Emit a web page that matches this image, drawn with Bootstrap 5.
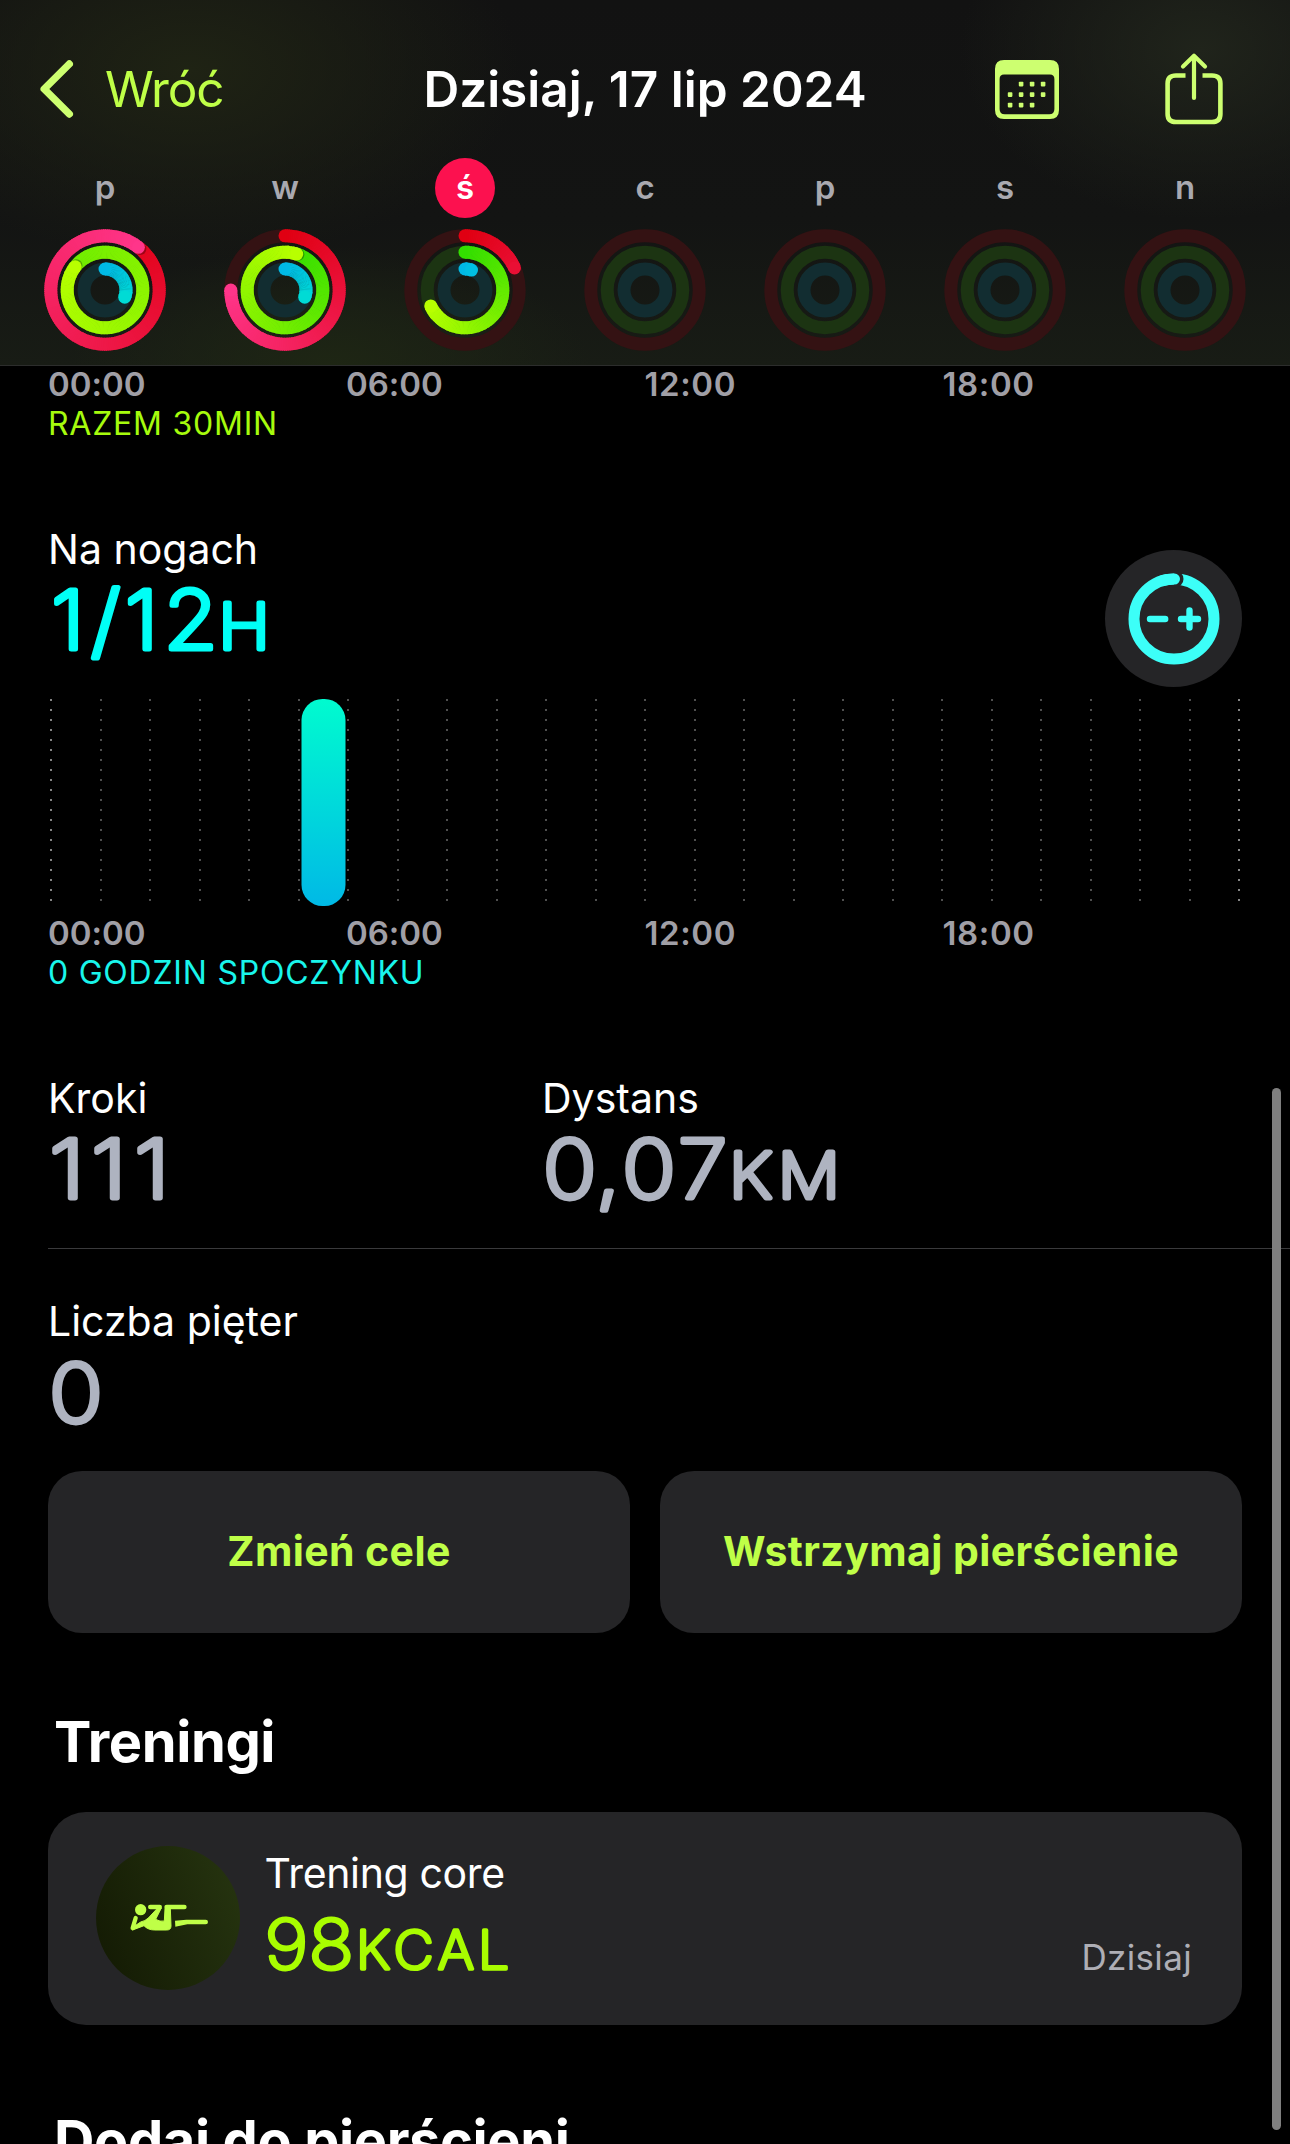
<!DOCTYPE html>
<html lang="pl" data-bs-theme="dark">
<head>
<meta charset="utf-8">
<meta name="viewport" content="width=device-width, initial-scale=1">
<title>Aktywność – Dzisiaj, 17 lip 2024</title>
<link rel="stylesheet" href="https://cdn.jsdelivr.net/npm/bootstrap@5.3.0/dist/css/bootstrap.min.css">
<style>
  body { font-family: Inter, "Liberation Sans", sans-serif; background: #000; color: #fff; height: 2144px; overflow: hidden; }
  svg { display: block; flex: none; overflow: visible; }
  .top-bar {
    height: 366px; padding-top: 59px; border-bottom: 1px solid #2c2d2c;
    background:
      radial-gradient(ellipse 330px 190px at 190px 70px, #1f2314 0%, #1b1f1400 100%),
      radial-gradient(ellipse 240px 170px at 1200px 50px, #20241b 0%, #1c1f1800 100%),
      radial-gradient(ellipse 260px 120px at 330px 366px, #1e2614 0%, #1c241400 100%),
      linear-gradient(#121212 0, #131413 60%, #181c15 100%);
  }
  .title-grid { display: grid; grid-template: 60px / 1fr auto 1fr; line-height: 60px; font-size: 49.5px; }
  .back { padding-left: 40px; gap: 32px; color: #bfff47; letter-spacing: -1.1px; }
  .tools { padding-right: 67px; gap: 106px; }
  .days { padding: 39px 15px 0; }
  .day-name { width: 60px; height: 60px; line-height: 58px; font-size: 33px; font-weight: 600; color: #a9a9b0; margin-bottom: 11px; }
  .day-name.today { background: #fc114f; color: #fff; }
  .body-pad { padding-left: 48px; }
  .hours { height: 36px; line-height: 36px; font-size: 33px; font-weight: 600; color: #a09fa6; }
  .hours span { width: 298px; letter-spacing: -.05px; }
  .hours span:nth-child(n+3) { letter-spacing: .6px; padding-left: .5px; }
  .total { margin-top: 3px; margin-bottom: -1px; line-height: 38px; font-size: 32px; letter-spacing: .77px; }
  .metric { line-height: 50px; font-size: 41px; }
  .gap-lg { margin-top: 82px; }
  .figure-text { font-weight: 200; stroke-linejoin: round; stroke-linecap: round; }
  .adjust { width: 137px; height: 137px; margin: 26px 48px 0 0; background: #252527; }
  .c-lime { color: #a6fb0d; }
  .c-aqua { color: #19f5eb; }
  .rule { height: 1px; background: #3a3a3c; margin: 15px 0 47px; }
  .actions { margin: 15px 48px 0 0; gap: 30px; }
  .action { height: 162px; border-radius: 34px; background: #252527; color: #bfff47; font-size: 41px; font-weight: 700; letter-spacing: .4px; border: 0; }
  .section-title { line-height: 70px; font-size: 56px; font-weight: 700; letter-spacing: -.42px; margin: 74px 0 0 6px; }
  .workout { margin: 35px 48px 0 0; height: 213px; border-radius: 38px; background: #252527; padding: 34px 50px 0 48px; }
  .workout .metric { margin: 2px 0 0 -1.5px; letter-spacing: -.36px; }
  .when { margin-bottom: 48px; line-height: 40px; font-size: 35px; letter-spacing: .35px; color: #aeaeb5; }
  .scroll-thumb { top: 1088px; left: 1272px; width: 9px; height: 1042px; background: #7f7f7f; }
</style>
<script src="https://cdn.jsdelivr.net/npm/bootstrap@5.3.0/dist/js/bootstrap.bundle.min.js"></script>
</head>
<body class="position-relative">

<header class="top-bar">
  <div class="title-grid align-items-center">
    <a class="back d-flex align-items-center text-decoration-none" href="#">
      <svg width="33" height="58" viewBox="0 0 33 58"><path d="M29.3 4 4.2 29 29.3 54" fill="none" stroke="#cdff70" stroke-width="7.4" stroke-linecap="round" stroke-linejoin="round"/></svg>
      <span>Wróć</span>
    </a>
    <div class="fw-semibold">Dzisiaj, 17 lip 2024</div>
    <div class="tools d-flex justify-content-end align-items-center">
      <svg width="64" height="59" viewBox="0 0 64 59" fill="#cdff70">
        <path fill-rule="evenodd" d="M9 0H55Q64 0 64 9V50Q64 59 55 59H9Q0 59 0 50V9Q0 0 9 0ZM9 14.500Q4.600 14.500 4.600 19V49Q4.600 54.300 9.800 54.300H54.200Q59.400 54.300 59.400 49V19Q59.400 14.500 55 14.500Z"/>
        <g id="cal-dots"></g>
      </svg>
      <svg width="58" height="72" viewBox="0 0 58 72" fill="none" stroke="#cdff70" stroke-width="4.600" stroke-linecap="round" stroke-linejoin="round">
        <path d="M20.500 22.500H11Q2.600 22.500 2.600 30.500V61Q2.600 69 11 69H47Q55.400 69 55.400 61V30.500Q55.400 22.500 47 22.500H37.500" stroke-linecap="butt"/>
        <path d="M29 45V3.500M18 13.500 29 2.800 40 13.500" stroke-width="4.200"/>
      </svg>
    </div>
  </div>
  <div class="days d-flex" id="days"></div>
</header>

<main class="body-pad">
  <div class="hours d-flex"><span>00:00</span><span>06:00</span><span>12:00</span><span>18:00</span></div>
  <div class="total c-lime">RAZEM 30MIN</div>

  <section class="gap-lg">
    <div class="d-flex justify-content-between">
      <div>
        <div class="metric">Na nogach</div>
        <svg width="400" height="110" class="figure-text" fill="#00fff6" stroke="#00fff6" stroke-width="5">
          <text y="75" font-size="81" x="2.9 39.8 71.4 107.1" transform="scale(1.08 1)">1/12</text>
          <text y="75" font-size="62.600" x="153.600" transform="scale(1.11 1)">H</text>
        </svg>
      </div>
      <div class="adjust rounded-circle d-flex align-items-center justify-content-center">
        <svg width="92" height="92" viewBox="-46 -46 92 92" fill="none" stroke="#3cfff8" stroke-linecap="round">
          <circle r="40" stroke-width="11"/>
          <path d="M0-40H1" stroke="#252527" stroke-width="17"/>
          <path d="M-12-38.160A40 40 0 0 1 0-40" stroke-width="11" stroke-linecap="butt"/>
          <path d="M-6-39.550A40 40 0 0 1 .5-40" stroke-width="11"/>
          <path d="M-24 0H-8.800M7 0H24M15.500-8.500V8.500" stroke-width="6.400"/>
        </svg>
      </div>
    </div>
    <svg width="1242" height="208" style="margin-top:12px">
      <defs><linearGradient id="stand" x1="0" y1="0" x2="0" y2="1"><stop stop-color="#00fbcf"/><stop offset="1" stop-color="#00b9e6"/></linearGradient></defs>
      <g id="grid"></g>
      <rect x="253.500" y="0" width="44" height="207" rx="21" fill="url(#stand)"/>
    </svg>
    <div class="hours d-flex mt-2"><span>00:00</span><span>06:00</span><span>12:00</span><span>18:00</span></div>
    <div class="total c-aqua">0 GODZIN SPOCZYNKU</div>
  </section>

  <section class="gap-lg">
    <div class="d-flex">
      <div style="width:494px">
        <div class="metric">Kroki</div>
        <svg width="300" height="110" class="figure-text" fill="#aeb3c0" stroke="#aeb3c0" stroke-width="5"><text y="75.200" font-size="81" x="1 37.6 75" transform="scale(1.15 1)">111</text></svg>
      </div>
      <div>
        <div class="metric">Dystans</div>
        <svg width="400" height="110" class="figure-text" fill="#aeb3c0" stroke="#aeb3c0" stroke-width="5">
          <text y="75.200" font-size="81" x=".8 48.9 72.8 123.7" transform="scale(1.1 1)">0,07</text>
          <text y="75.200" font-size="62.600" x="170.2 214.6" transform="scale(1.1 1)">KM</text>
        </svg>
      </div>
    </div>
    <div class="rule"></div>
    <div class="metric">Liczba pięter</div>
    <svg width="300" height="110" class="figure-text" fill="#aeb3c0" stroke="#aeb3c0" stroke-width="5"><text y="75.500" font-size="81" x="1" transform="scale(1.1 1)">0</text></svg>
  </section>

  <div class="actions d-flex">
    <button class="action flex-fill w-50">Zmień cele</button>
    <button class="action flex-fill w-50">Wstrzymaj pierścienie</button>
  </div>

  <h2 class="section-title">Treningi</h2>
  <div class="workout d-flex">
    <svg width="144" height="144" viewBox="48 48 432 432">
      <defs><linearGradient id="disc" x1="0" y1=".7" x2="1" y2=".3"><stop stop-color="#141b04"/><stop offset="1" stop-color="#25330f"/></linearGradient></defs>
      <circle cx="264" cy="264" r="216" fill="url(#disc)"/>
      <g fill="#bfff47" stroke="#bfff47" stroke-linecap="round" stroke-linejoin="round">
        <circle cx="182" cy="239" r="17" stroke="none"/>
        <path d="M167 264 158 294" fill="none" stroke-width="13"/>
        <path d="M211 231H239M260 231H313" fill="none" stroke-width="14"/>
        <path d="M158 300 192 287Q204 300 224 300H260Q273 300 273 288L271 236 262 228Q255 230 255 236L253 273Q240 276 227 268L244 234 233 234 205 264Q196 273 182 276L158 292Z" stroke-width="3"/>
        <path d="M285 272 319 269H377A7 7 0 0 1 377 283H322L286 290Z" stroke="none"/>
      </g>
    </svg>
    <div style="margin-left:26px">
      <div class="metric">Trening core</div>
      <svg width="400" height="85" class="figure-text" fill="#a9fd00" stroke="#a9fd00" stroke-width="3.200">
        <text y="70.700" font-size="68.500" x="-1.4 38.6" transform="scale(1.1 1)">98</text>
        <text y="70.700" font-size="52.700" x="85.7 121.4 163.7 201.8" transform="scale(1.05 1)" stroke-width="3.600">KCAL</text>
      </svg>
    </div>
    <div class="when ms-auto align-self-end">Dzisiaj</div>
  </div>

  <h2 class="section-title text-nowrap" style="margin-top:81px">Dodaj do pierścieni</h2>
</main>

<div class="scroll-thumb position-absolute rounded-pill"></div>

<script>
  // Concentric rings: radii, track colours, stroke width, and start/end colours.
  const RADII = [54.2, 37.8, 21], TRACK = ['#341213', '#1c3412', '#122d31'], W = 13;
  const START = [[224, 0, 18], [51, 222, 0], [0, 185, 230]], END = [[255, 53, 138], [184, 255, 0], [0, 225, 210]];
  // Weekday letter and sweep in degrees of each ring; above 360 the ring overlaps itself.
  const week = [
    ['p', [398, 668, 110]], ['w', [270, 378, 110]], ['ś', [66, 245, 18]],
    ['c', null], ['p', null], ['s', null], ['n', null]
  ];
  const pt = (r, d) => { const a = d * Math.PI / 180; return [(r * Math.sin(a)).toFixed(2), (-r * Math.cos(a)).toFixed(2)]; };
  const mix = (a, b, t) => 'rgb(' + a.map((v, i) => Math.round(v + (b[i] - v) * t)).join() + ')';
  function arc(i, sweep) {
    const r = RADII[i], full = Math.max(sweep, i === 1 ? 200 : i ? 130 : 230);
    const col = d => mix(START[i], END[i], Math.max(0, d) / full);
    const cap = d => { const p = pt(r, d); return `<circle cx="${p[0]}" cy="${p[1]}" r="${W / 2}" fill="${col(d)}"/>`; };
    const seg = (d, e) => `<path d="M${pt(r, d)}A${r} ${r} 0 0 1 ${pt(r, e)}" stroke="${col(d)}" stroke-width="${W}" fill="none"/>`;
    const from = Math.max(0, sweep - 360);
    let s = sweep < 360 ? cap(0) : '';
    for (let d = from; d < sweep - 14; d += 2) s += seg(d, Math.min(d + 3, sweep));
    // Soft shadow ahead of the tip where it lies over the first lap.
    if (sweep > 360) {
      const p = pt(r, sweep + 2.5);
      s += `<circle cx="${p[0]}" cy="${p[1]}" r="${W / 2 - .3}" fill="#000" opacity=".3"/>`;
    }
    for (let d = Math.max(from, sweep - 16); d < sweep; d += 2) s += seg(d, Math.min(d + 3, sweep));
    return s + cap(sweep);
  }
  document.getElementById('days').innerHTML = week.map(([n, v], k) => {
    const rings = RADII.map((r, i) => `<circle r="${r}" fill="none" stroke="${TRACK[i]}" stroke-width="${W}"/>` + (v ? arc(i, v[i]) : '')).join('');
    return `<div class="flex-fill d-flex flex-column align-items-center">
      <div class="day-name rounded-circle text-center${k === 2 ? ' today' : ''}">${n}</div>
      <svg width="122" height="122" viewBox="-61 -61 122 122">${rings}</svg></div>`;
  }).join('');

  // Hour grid: dotted verticals, the two outer ones brighter.
  let g = '';
  for (let i = 0; i <= 24; i++) {
    const x = Math.round(2 + i * 49.5);
    g += `<path d="M${x + 1} 0V203" stroke="${i % 24 ? '#4f4f4f' : '#858585'}" stroke-width="2" stroke-dasharray="2 8"/>`;
  }
  document.getElementById('grid').innerHTML = g;

  // Calendar day dots.
  document.getElementById('cal-dots').innerHTML =
    [[26, 24], [37, 24], [48, 24], [15, 34.5], [26, 34.5], [37, 34.5], [48, 34.5], [15, 45], [26, 45], [37, 45]]
      .map(([x, y]) => `<rect x="${x - 2.2}" y="${y - 2.2}" width="4.6" height="4.6" rx=".8"/>`).join('');
</script>
</body>
</html>
